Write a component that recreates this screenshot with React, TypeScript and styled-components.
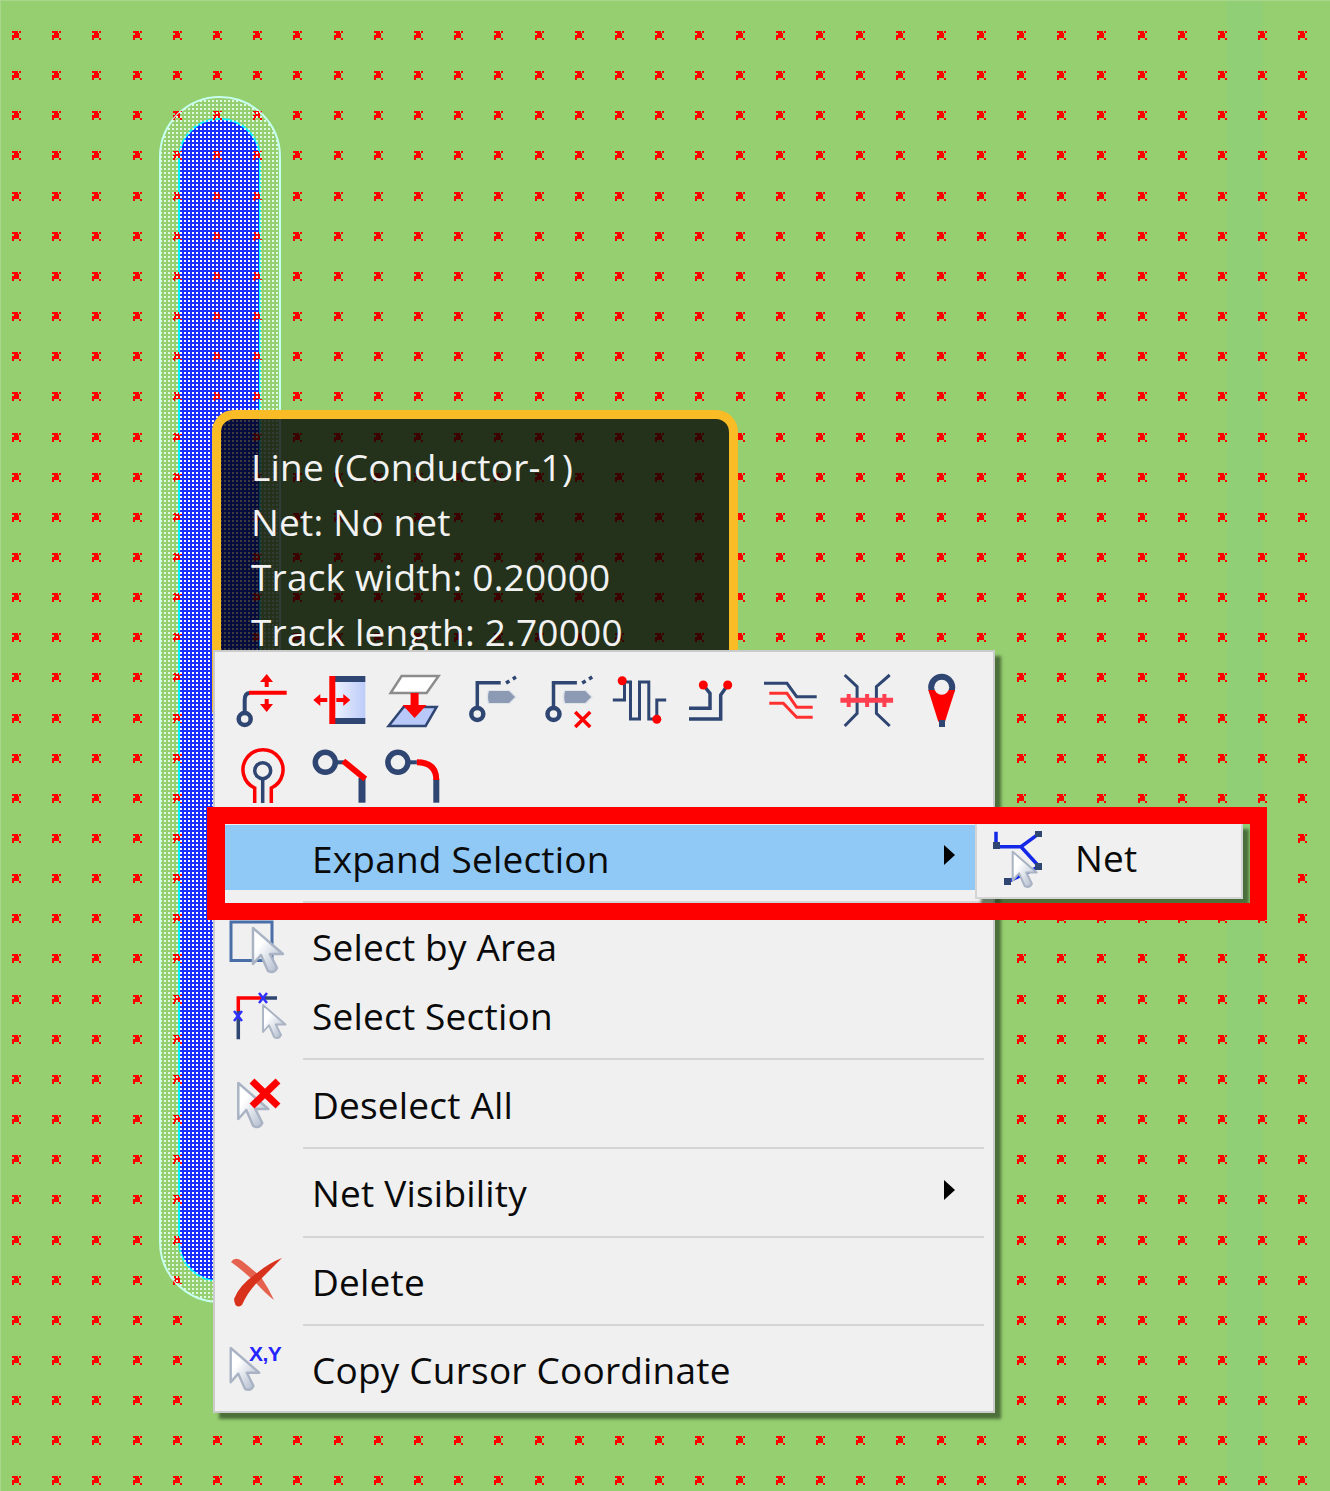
import React from "react";
import styled, { createGlobalStyle } from "styled-components";

const NAVY = "#2f4672";
const RED = "#ff0000";

const Global = createGlobalStyle`
  html, body { margin: 0; padding: 0; background: #96cf70; }
  #root { width: 1330px; height: 1491px; overflow: hidden; }
`;

const Page = styled.div`
  position: relative;
  width: 1330px;
  height: 1491px;
  overflow: hidden;
  background: #96cf70;
  border-top: 1px solid #a8d68a;
  border-left: 1px solid #a8d68a;
  box-sizing: border-box;
  font-family: "Open Sans", "Noto Sans", sans-serif;
`;

const Board = styled.svg`
  position: absolute;
  left: -1px;
  top: -1px;
  display: block;
`;

const Tip = styled.div`
  position: absolute;
  left: 211px;
  top: 409px;
  width: 526px;
  height: 320px;
  box-sizing: border-box;
  border: 9px solid #f9bb26;
  border-radius: 22px;
  background: rgba(0, 0, 0, 0.76);
  padding: 20px 0 0 30px;
  color: #f2f2f2;
  font-size: 37px;
  line-height: 55px;
  letter-spacing: 0.2px;
`;

const Menu = styled.div`
  position: absolute;
  left: 212px;
  top: 649px;
  width: 782px;
  height: 763px;
  box-sizing: border-box;
  background: #f0f0f0;
  border: 2px solid #cbcbcb;
  box-shadow: 6px 6px 3px rgba(45, 70, 35, 0.7);
  padding: 18px 9px 9px 10px;
  color: #0a0a0a;
  font-size: 37px;
  letter-spacing: 0.2px;
`;

const Toolbar = styled.div`
  display: grid;
  grid-template-columns: repeat(10, 75.7px);
  grid-auto-rows: 60px;
  row-gap: 15px;
  margin: 0 0 20px 7px;
`;

const Glyph = styled.svg`
  display: block;
  width: 60px;
  height: 60px;
  overflow: visible;
  flex: none;
`;

const Row = styled.div<{ $active?: boolean; $gap?: number }>`
  display: flex;
  align-items: center;
  height: 65px;
  box-sizing: border-box;
  padding: 5px 29px 0 2px;
  margin-bottom: ${(p) => p.$gap ?? 0}px;
  background: ${(p) => (p.$active ? "#90c8f6" : "transparent")};
`;

const Slot = styled.div`
  flex: none;
  width: 60px;
  height: 60px;
  margin-right: 25px;
`;

const Label = styled.span`
  flex: 1;
  white-space: nowrap;
  margin-top: -4px;
`;

const Arrow = styled.span`
  flex: none;
  width: 0;
  height: 0;
  margin: -10px 0 0 0;
  border-style: solid;
  border-width: 10px 0 10px 11px;
  border-color: transparent transparent transparent #000;
`;

const Sep = styled.div`
  height: 2px;
  background: #d5d5d5;
  margin: 10.8px 0 10.8px 78px;
`;

const SubMenu = styled.div`
  position: absolute;
  left: 974px;
  top: 822px;
  width: 268px;
  height: 76px;
  box-sizing: border-box;
  background: #f0f0f0;
  border: 2px solid #d4d4d4;
  border-top-color: #f0f0f0;
  box-shadow: 6px 6px 3px rgba(45, 70, 35, 0.7);
  display: flex;
  align-items: center;
  padding: 0 0 3px 14px;
  font-size: 37px;
  color: #0a0a0a;
  letter-spacing: 0.2px;
`;

const SubLabel = styled.span`
  margin: -4px 0 0 24px;
`;

const Frame = styled.div`
  position: absolute;
  left: 206px;
  top: 806px;
  width: 1060px;
  height: 113px;
  box-sizing: border-box;
  border: 17px solid ${RED};
  border-left-width: 18px;
  pointer-events: none;
`;

function marksPath() {
  let d = "";
  for (let i = 0; i < 34; i++) {
    for (let j = 0; j < 37; j++) {
      const x = Math.round(12 + i * 40.2);
      const y = Math.round(31 + j * 40.15);
      const r = (a: number, b: number, w: number, h: number) =>
        `M${x + a} ${y + b}h${w}v${h}h${-w}z`;
      d += r(0, 0, 6, 2) + r(7, 0, 2, 2) + r(2, 2, 5, 5) + r(0, 4, 2, 5) + r(7, 7, 2, 2);
    }
  }
  return d;
}

const Canvas = () => (
  <Board width={1330} height={1491} viewBox="0 0 1330 1491">
    <defs>
      <pattern id="dotsBlue" width={4} height={4} patternUnits="userSpaceOnUse">
        <rect x={0} y={0} width={2} height={2} fill="#ffffff" />
      </pattern>
      <pattern id="dotsClear" width={4} height={4} patternUnits="userSpaceOnUse">
        <rect x={0} y={0} width={2} height={2} fill="#dcfae4" />
      </pattern>
    </defs>
    <rect x={1227} y={0} width={36} height={1491} fill="#90cf76" />
    <rect x={1} y={0} width={1329} height={1} fill="#aad88e" />
    <path d={marksPath()} fill={RED} shapeRendering="crispEdges" />
    <rect x={160} y={97} width={120} height={1205} rx={60} fill="url(#dotsClear)" stroke="#c4fff0" strokeWidth={2} />
    <rect x={179} y={119} width={81} height={1162} rx={40} fill="#1a2eff" stroke="#00f0ff" strokeWidth={2} />
    <clipPath id="innerClip">
      <rect x={160} y={97} width={120} height={1205} rx={60} />
    </clipPath>
    <g clipPath="url(#innerClip)">
      <path d={marksPath()} fill={RED} shapeRendering="crispEdges" />
      <rect x={160} y={97} width={120} height={1205} fill="url(#dotsClear)" />
    </g>
    <rect x={180} y={120} width={79} height={1160} rx={39} fill="url(#dotsBlue)" />
  </Board>
);

const Pad = () => (
  <>
    <path d="M26 20H48L55 27L48 34H26Q23 27 26 20Z" fill="#dfe3ea" />
    <path d="M27 21H47L53 27L47 33H27Q25 27 27 21Z" fill="#8c9ab4" />
  </>
);

const Via = ({ x = 15.3, y = 44, r = 6 }: { x?: number; y?: number; r?: number }) => (
  <circle cx={x} cy={y} r={r} fill="none" stroke={NAVY} strokeWidth={4.5} />
);

const Cursor = ({ x, y, s = 1, id = "c" }: { x: number; y: number; s?: number; id?: string }) => (
  <g transform={`translate(${x} ${y}) scale(${s})`}>
    <path
      d="M0 0V36L8 27L15 43Q21 46 24 40L17 26H30Z"
      fill={`url(#${id})`}
      stroke="#a9b3c4"
      strokeWidth={2.5}
      strokeLinejoin="round"
    />
    <defs>
      <linearGradient id={id} x1="0" y1="0" x2="1" y2="1">
        <stop offset="0.3" stopColor="#ffffff" />
        <stop offset="1" stopColor="#a5b1c6" />
      </linearGradient>
    </defs>
  </g>
);

const Line = styled.path<{ $c?: string; $w?: number }>`
  fill: none;
  stroke: ${(p) => p.$c ?? NAVY};
  stroke-width: ${(p) => p.$w ?? 3};
`;

const vb = (x: number) => `${x} 0 60 60`;

const tools: React.ReactNode[] = [
  <Glyph key="1" viewBox={vb(0)}>
    <Via x={12.7} y={49} />
    <Line $w={4} d="M12.7 43V30Q12.7 23 18 23" />
    <Line $c={RED} $w={4} d="M17 22.7H54.7" />
    <Line $c={RED} d="M34.7 11V17M34.7 29V35" $w={4} />
    <path d="M28 12L34.7 4L41 12ZM28 34L34.7 42L41 34Z" fill={RED} />
  </Glyph>,
  <Glyph key="2" viewBox={vb(-1.3)}>
    <defs>
      <linearGradient id="g2" x1="0" x2="1" y1="0" y2="0">
        <stop offset="0" stopColor="#eef2ff" />
        <stop offset="1" stopColor="#bccbf8" />
      </linearGradient>
    </defs>
    <rect x={24} y={8} width={32} height={44} fill="url(#g2)" />
    <rect x={24} y={6} width={32} height={6} fill={NAVY} />
    <rect x={24} y={48} width={32} height={6} fill={NAVY} />
    <rect x={20} y={6} width={6} height={48} fill={RED} />
    <path d="M4 30L11 24V28H18V32H11V36ZM41 30L34 24V28H27V32H34V36Z" fill={RED} />
  </Glyph>,
  <Glyph key="3" viewBox={vb(-0.6)}>
    <path d="M18 6H55L43 23H7Z" fill="#fff" stroke="#8c8c8c" strokeWidth={2.5} />
    <path d="M20 37H53L42 56H5Z" fill="#b8c8f8" stroke={NAVY} strokeWidth={2.5} />
    <path d="M27 23H35V35H43L31 48L19 35H27Z" fill={RED} />
  </Glyph>,
  <Glyph key="4" viewBox={vb(-3)}>
    <Via />
    <Line $w={3.5} d="M15.3 37V12.7H38.7" />
    <Line $w={3.5} strokeDasharray="4 4" d="M44 13L54 7" />
    <Pad />
  </Glyph>,
  <Glyph key="5" viewBox={vb(-3.2)}>
    <Via />
    <Line $w={3.5} d="M15.3 37V12.7H38.7" />
    <Line $w={3.5} strokeDasharray="4 4" d="M44 13L54 7" />
    <Pad />
    <Line $c={RED} $w={3.5} d="M37 42L52 57M52 42L37 57" />
  </Glyph>,
  <Glyph key="6" viewBox={vb(-0.5)}>
    <Line $w={3} d="M2.3 30H14V12H20V49H29V12H38.3V49H46.3V30H55.7" />
    <circle cx={11.7} cy={10.7} r={4.5} fill={RED} />
    <circle cx={46.3} cy={49.3} r={4.5} fill={RED} />
  </Glyph>,
  <Glyph key="7" viewBox={vb(4)}>
    <Line $w={3.5} d="M7 38.3H28V23.3L21.3 15" />
    <Line $w={3.5} d="M7 49H38.7V25L45.7 15" />
    <circle cx={21.3} cy={15} r={4.5} fill={RED} />
    <circle cx={45.7} cy={15} r={4.5} fill={RED} />
  </Glyph>,
  <Glyph key="8" viewBox={vb(2)}>
    <Line $w={3} d="M4 13.3H27L36.7 26.7H56.7" />
    <Line $c="#ff3030" $w={3} d="M9.3 23.3H27L36.7 37.3H52.7" />
    <Line $c="#ff3030" $w={3} d="M9.3 33.3H23.3L36.7 47.3H52.7" />
  </Glyph>,
  <Glyph key="9" viewBox={vb(1.6)}>
    <Line $w={3} d="M8.3 5L20.7 16.7V43.3L8.3 56" />
    <Line $w={3} d="M53.3 5L40 16.7V43.3L53.3 56" />
    <Line $c="#ff4050" $w={5} d="M4 30.3H56.7" />
    <Line $c="#ff4050" $w={4} d="M12.3 24V37M30.7 24V37M48 24V37" />
  </Glyph>,
  <Glyph key="10" viewBox={vb(2)}>
    <circle cx={30.7} cy={17.3} r={13.5} fill={NAVY} />
    <path d="M17.3 20H44.1L34 51.7H27.3Z" fill={RED} />
    <rect x={28} y={50} width={6} height={7} fill={NAVY} />
    <circle cx={30.7} cy={17.3} r={7.5} fill="#f0f0f0" />
  </Glyph>,
  <Glyph key="11" viewBox={vb(0)}>
    <Line $c={RED} $w={3.5} d="M22.7 58V43A20 20 0 1 1 39.3 43V58" />
    <circle cx={30.7} cy={25.7} r={8} fill="#f0f0f0" stroke={NAVY} strokeWidth={3.5} />
    <Line $w={3.5} d="M30.7 33V58" />
  </Glyph>,
  <Glyph key="12" viewBox={vb(-1.3)}>
    <circle cx={16} cy={17.3} r={10} fill="none" stroke={NAVY} strokeWidth={5.5} />
    <Line $w={4} d="M26 17.3H35" />
    <Line $w={7} d="M52.7 33V57.7" />
    <Line $c={RED} $w={6} d="M34 16L56 34" />
  </Glyph>,
  <Glyph key="13" viewBox={vb(-0.6)}>
    <circle cx={14.3} cy={17.3} r={10} fill="none" stroke={NAVY} strokeWidth={5.5} />
    <Line $w={4} d="M24 17.3H33.3" />
    <Line $w={6} d="M52.7 34V57.7" />
    <Line $c={RED} $w={6} d="M33.3 17.3Q52.7 17.3 52.7 35" />
  </Glyph>,
];

const App = () => (
  <Page>
    <Global />
    <Canvas />
    <Tip>
      <div>Line (Conductor-1)</div>
      <div>Net: No net</div>
      <div>Track width: 0.20000</div>
      <div>Track length: 2.70000</div>
    </Tip>
    <Menu>
      <Toolbar>{tools}</Toolbar>
      <Row $active>
        <Slot />
        <Label>Expand Selection</Label>
        <Arrow />
      </Row>
      <Sep />
      <Row $gap={4}>
        <Slot>
          <Glyph viewBox="0 0 60 60">
            <rect x={4} y={3} width={41} height={38.5} fill="none" stroke="#4a6ea8" strokeWidth={3} />
            <Cursor x={26} y={9} s={1} id="cA" />
          </Glyph>
        </Slot>
        <Label>Select by Area</Label>
      </Row>
      <Row>
        <Slot>
          <Glyph viewBox="0 0 60 60">
            <Line $w={3.5} d="M11.3 23V51.3M36.3 10H50" />
            <Line $c={RED} $w={3.5} d="M11.3 23V10H36.3" />
            <Line $c="#3030ff" $w={2.5} d="M7 23L15 33M15 23L7 33M32 5L40 15M40 5L32 15" />
            <Cursor x={36} y={17} s={0.75} id="cB" />
          </Glyph>
        </Slot>
        <Label>Select Section</Label>
      </Row>
      <Sep />
      <Row>
        <Slot>
          <Glyph viewBox="0 0 60 60">
            <Cursor x={11.3} y={7} s={1} id="cC" />
            <Line $c={RED} $w={7} d="M25 5L51 30M51 5L25 30" />
          </Glyph>
        </Slot>
        <Label>Deselect All</Label>
      </Row>
      <Sep />
      <Row>
        <Slot />
        <Label>Net Visibility</Label>
        <Arrow />
      </Row>
      <Sep />
      <Row>
        <Slot>
          <Glyph viewBox="0 0 60 60">
            <path d="M4 9Q8 3 15 8Q24 15 34 24Q42 36 47 47Q40 42 28 29Q14 16 4 9Z" fill="#e5624e" />
            <path d="M55 5Q42 10 30 20Q12 32 7 46Q8 57 15 52Q22 36 34 26Q46 14 55 5Z" fill="#d8321c" />
          </Glyph>
        </Slot>
        <Label>Delete</Label>
      </Row>
      <Sep />
      <Row>
        <Slot>
          <Glyph viewBox="0 0 60 60">
            <Cursor x={3.7} y={6} s={0.95} id="cD" />
            <text
              x={22}
              y={19}
              fontFamily="'Liberation Sans', sans-serif"
              fontWeight={700}
              fontSize={21}
              letterSpacing={-0.5}
              fill="#2424ff"
            >
              X,Y
            </text>
          </Glyph>
        </Slot>
        <Label>Copy Cursor Coordinate</Label>
      </Row>
    </Menu>
    <SubMenu>
      <Glyph viewBox="0 0 60 60">
        <Line $c="#1428e8" $w={3.5} d="M5 1.7V16.7H30L48.3 3.3M30 16.7L48.3 36.7L16.7 51.7" />
        <path d="M2 12h7v7h-7zM44 1h7v6h-7zM44 33h7v7h-7zM13 48h7v7h-7z" fill={NAVY} />
        <Cursor x={21.7} y={21.7} s={0.8} id="cE" />
      </Glyph>
      <SubLabel>Net</SubLabel>
    </SubMenu>
    <Frame />
  </Page>
);

export default App;
